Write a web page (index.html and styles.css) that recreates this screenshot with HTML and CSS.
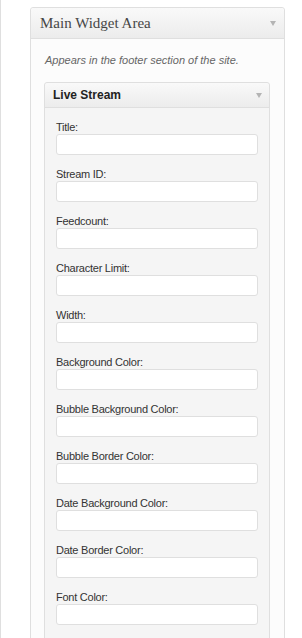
FILE: index.html
```html
<!DOCTYPE html>
<html lang="en">
<head>
  <meta charset="UTF-8">
  <title>Widgets</title>
  <link rel="stylesheet" href="styles.css">
</head>
<body>
  <div class="page">
    <div class="sidebar">
      <div class="sidebar-header">
        <h3 class="sidebar-title">Main Widget Area</h3>
        <span class="arrow"></span>
      </div>
      <div class="sidebar-body">
        <p class="description">Appears in the footer section of the site.</p>

        <div class="widget">
          <div class="widget-header">
            <h4 class="widget-title">Live Stream</h4>
            <span class="arrow"></span>
          </div>
          <div class="widget-body">
            <div class="field">
              <label for="title">Title:</label>
              <input type="text" id="title">
            </div>
            <div class="field">
              <label for="streamId">Stream ID:</label>
              <input type="text" id="streamId">
            </div>
            <div class="field">
              <label for="feedcount">Feedcount:</label>
              <input type="text" id="feedcount">
            </div>
            <div class="field">
              <label for="charLimit">Character Limit:</label>
              <input type="text" id="charLimit">
            </div>
            <div class="field">
              <label for="width">Width:</label>
              <input type="text" id="width">
            </div>
            <div class="field">
              <label for="bgColor">Background Color:</label>
              <input type="text" id="bgColor">
            </div>
            <div class="field">
              <label for="bubbleBg">Bubble Background Color:</label>
              <input type="text" id="bubbleBg">
            </div>
            <div class="field">
              <label for="bubbleBorder">Bubble Border Color:</label>
              <input type="text" id="bubbleBorder">
            </div>
            <div class="field">
              <label for="dateBg">Date Background Color:</label>
              <input type="text" id="dateBg">
            </div>
            <div class="field">
              <label for="dateBorder">Date Border Color:</label>
              <input type="text" id="dateBorder">
            </div>
            <div class="field">
              <label for="fontColor">Font Color:</label>
              <input type="text" id="fontColor">
            </div>
          </div>
        </div>
      </div>
    </div>
  </div>
</body>
</html>
```

FILE: styles.css
```css
* {
  margin: 0;
  padding: 0;
  box-sizing: border-box;
}

body {
  background: #fff;
  font-family: 'Liberation Sans', Arial, sans-serif;
  color: #333;
  overflow: hidden;
}

.page {
  min-height: 100vh;
  border-left: 1px solid #dfdfdf;
  padding: 7px 0 0 29px;
}

.sidebar {
  width: 255px;
  border: 1px solid #dfdfdf;
  border-radius: 3px;
  background: #fcfcfc;
}

.sidebar-header {
  display: flex;
  align-items: center;
  justify-content: space-between;
  height: 31px;
  padding: 0 8px 0 9px;
  border-bottom: 1px solid #dfdfdf;
  background: linear-gradient(to bottom, #f9f9f9, #ececec);
  border-radius: 3px 3px 0 0;
}

.sidebar-title {
  font-family: 'Liberation Serif', 'Times New Roman', serif;
  font-size: 15px;
  font-weight: normal;
  color: #464646;
  line-height: 30px;
}

.arrow {
  width: 0;
  height: 0;
  border-left: 3.5px solid transparent;
  border-right: 3.5px solid transparent;
  border-top: 5px solid #b4b4b4;
}

.sidebar-body {
  padding: 15px 14px 20px 13px;
}

.description {
  font-size: 11px;
  line-height: 13px;
  font-style: italic;
  color: #666;
  padding-left: 1px;
  margin-bottom: 15px;
}

.widget {
  border: 1px solid #dfdfdf;
  border-radius: 3px;
  background: #f5f5f5;
}

.widget-header {
  display: flex;
  align-items: center;
  justify-content: space-between;
  height: 25px;
  padding: 0 7px 0 8px;
  border-bottom: 1px solid #dfdfdf;
  background: linear-gradient(to bottom, #f9f9f9, #ececec);
  border-radius: 3px 3px 0 0;
}

.widget-title {
  font-size: 12px;
  font-weight: bold;
  color: #222;
  line-height: 24px;
}

.widget-body {
  padding: 12px 10px 30px 11px;
}

.field {
  margin-bottom: 12px;
}

.field label {
  display: block;
  font-size: 11px;
  letter-spacing: -0.25px;
  line-height: 14px;
  color: #333;
}

.field input {
  display: block;
  width: 202px;
  height: 21px;
  border: 1px solid #dfdfdf;
  border-radius: 3px;
  background: #fff;
  font-size: 12px;
}
```
